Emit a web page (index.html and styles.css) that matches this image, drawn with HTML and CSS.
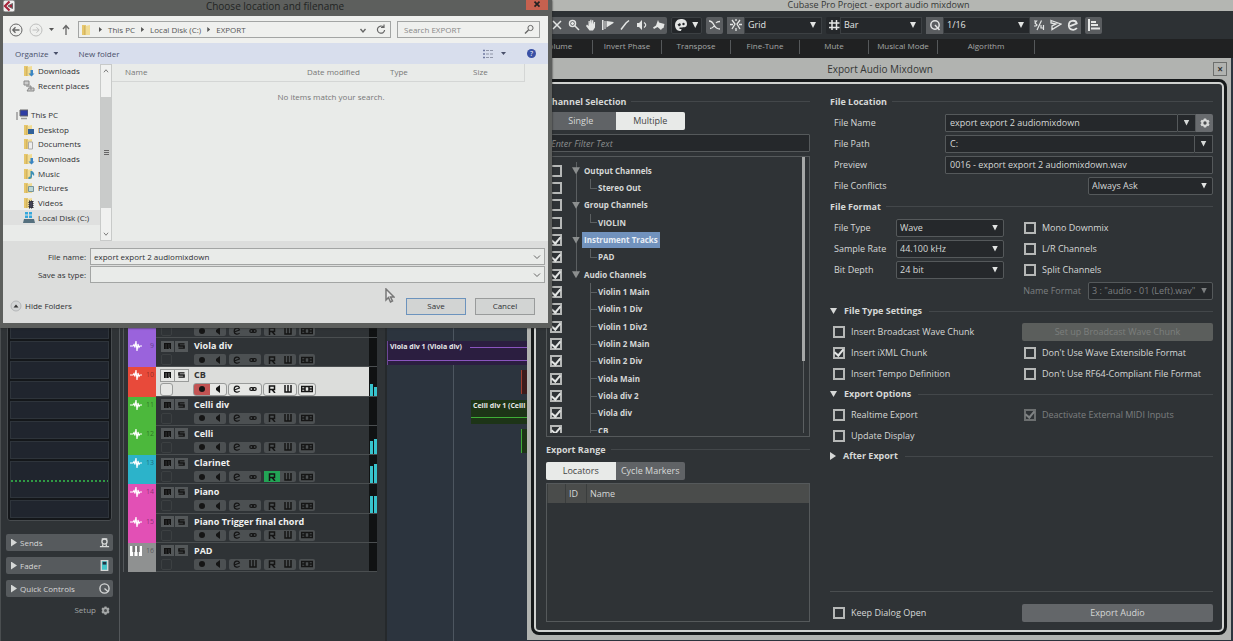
FILE: index.html
```html
<!DOCTYPE html>
<html lang="en">
<head>
<meta charset="utf-8">
<title>Cubase Pro Project - export audio mixdown</title>
<link rel="stylesheet" href="styles.css">
</head>
<body>
<svg class="defs" aria-hidden="true">
  <symbol id="wave" viewBox="0 0 12 10"><path d="M0 5h3l1-1.500 1 3L6 0l1 10 1-7 1 3.500L10 5h2" fill="none" stroke="#fff" stroke-width="1.1"/></symbol>
  <symbol id="keys" viewBox="0 0 12 10"><path d="M0 0h3v10H0zM4.5 0h3v10h-3zM9 0h3v10H9z" fill="#fff"/><path d="M2.4 0h2.700v6H2.400zM7 0h2.700v6H7z" fill="#777"/></symbol>
  <symbol id="m" viewBox="0 0 8 7"><path d="M.5 7V.5h7V7M4 1v6M2.200 1v6M5.800 1v6" fill="none" stroke="currentColor" stroke-width="1.500"/></symbol>
  <symbol id="s" viewBox="0 0 8 7"><path d="M7.500 1H1v2.500h6V6H.5" fill="none" stroke="currentColor" stroke-width="1.700"/></symbol>
  <symbol id="rec" viewBox="0 0 8 8"><circle cx="4" cy="4" r="3" fill="currentColor"/></symbol>
  <symbol id="mon" viewBox="0 0 8 8"><path d="M6 0v8L2 5V3z" fill="currentColor"/></symbol>
  <symbol id="e" viewBox="0 0 8 8"><path d="M2 4.800 6.500 3C6 .6 1.200.2 1.200 4.200c0 3.600 4 3.600 5.400 1.800" fill="none" stroke="currentColor" stroke-width="1.200"/></symbol>
  <symbol id="link" viewBox="0 0 10 8"><rect x="1" y="2.300" width="4.500" height="3.400" rx="1.700" fill="none" stroke="currentColor"/><rect x="4.500" y="2.300" width="4.500" height="3.400" rx="1.700" fill="none" stroke="currentColor"/></symbol>
  <symbol id="r" viewBox="0 0 8 8"><path d="M1.500 8V1h5v3.500h-5M4 4.500 7 8" fill="none" stroke="currentColor" stroke-width="1.500"/></symbol>
  <symbol id="w" viewBox="0 0 8 8"><path d="M1 0v7h6V0M4 0v7" fill="none" stroke="currentColor" stroke-width="1.500"/></symbol>
  <symbol id="lane" viewBox="0 0 12 8"><path d="M.5 1.500h11v5H.5zM4 2v4M8 2v4M1 4h3M8 4h3" fill="none" stroke="currentColor"/></symbol>
  <symbol id="gear" viewBox="0 0 12 12"><path d="M6 .5v11M1.200 3.200l9.600 5.600M1.200 8.800 10.800 3.200" stroke="currentColor" stroke-width="2.800"/><circle cx="6" cy="6" r="3.300" fill="none" stroke="currentColor" stroke-width="2.400"/><circle cx="6" cy="6" r="2" fill="#4c4f51"/></symbol>
  <symbol id="folder" viewBox="0 0 12 12"><path d="M1 1h4v10H1z" fill="#e6c66c"/><path d="M4 2l5-1v10H4z" fill="#f1dc95"/><path d="M4 2v9" stroke="#b99843" stroke-width=".7"/></symbol>
</svg>

<main class="desktop">
  <section class="project">
    <header class="project-title">Cubase Pro Project - export audio mixdown</header>
    <div class="toolbar">
      <div class="tools">
        <button aria-label="Mute"><svg viewBox="0 0 12 12"><path d="m2 2 8 8M10 2l-8 8"/></svg></button>
        <button aria-label="Zoom"><svg viewBox="0 0 12 12"><circle cx="4.500" cy="4.500" r="3"/><path d="m7 7 4 4M3 4.500h3M4.500 3v3"/></svg></button>
        <button aria-label="Hand"><svg viewBox="0 0 12 12"><path class="fill" d="M2 5.500 3.500 7V2h1.300v3L5.300.8h1.200V5l.6-3.700h1.200V5.500l.7-2.500h1.100L10 8.500 8 11.500H4.500L1 7z"/></svg></button>
        <button aria-label="Comp"><svg viewBox="0 0 12 12"><path class="fill" d="M0 1h1.500v10H0zM2.500 2h1v8h-1zM4.500 2l7 1v1l-7 4.500z"/></svg></button>
        <button aria-label="Line"><svg viewBox="0 0 12 12"><path d="M2 10.500 7 4l3-2.500"/></svg></button>
        <button aria-label="Play"><svg viewBox="0 0 12 12"><path class="fill" d="M1 4h2l3-3v10L3 8H1z"/><path d="M8 3.500q3.500 2.500 0 5" stroke-width="1.200"/></svg></button>
        <button aria-label="Colorize"><svg viewBox="0 0 12 12"><path class="fill" d="M0 8.500 3 6.500 5 1l1 2.500 5.500 1.500-1 4-1.500.5L8 11 4.500 8 1 10z"/></svg></button>
      </div>
      <button class="box palette" aria-label="Color"><svg viewBox="0 0 12 12"><path class="fill" d="M6 0C2 0 0 3 0 6s2 6 5 6c2 0 1-2 2-3s5 0 5-4S9 0 6 0"/><path class="hole" d="M2.500 5.500 5 4l1 2-2 1.500zM4.500 8.500h5v1.500h-5z"/><circle cx="8.500" cy="5" r="1.200" class="hole"/></svg><i class="tri"></i></button>
      <button class="box grey" aria-label="Crossfade"><svg viewBox="0 0 12 12"><path d="M0 2q3 0 5 4t6 4M1 9.500q2.500 0 4-2.500M7 4q1-1.500 4-1.500" stroke-width="1.300"/></svg></button>
      <div class="group">
        <button class="grey" aria-label="Snap"><svg viewBox="0 0 12 12"><path d="m2 1 3 4-3 5M10 1 7 5l3 5M6 0v2M6 9v3M0 5.500h3M9 5.500h3" stroke-width="1.300"/></svg></button>
        <span class="pick w-grid"><select aria-label="Snap type"><option>Grid</option></select></span>
      </div>
      <div class="group">
        <svg class="hash" viewBox="0 0 12 12"><path d="M4 1v10M8.500 1v10M1 4h10.500M1 8.500h10.500"/></svg>
        <span class="pick w-bar"><select aria-label="Grid type"><option>Bar</option></select></span>
      </div>
      <div class="group">
        <button class="grey" aria-label="Quantize"><svg viewBox="0 0 12 12"><circle cx="6" cy="6" r="4.200"/><path d="m6 6 4.500 5"/></svg></button>
        <span class="pick w-q"><select aria-label="Quantize value"><option>1/16</option></select></span>
        <button class="grey" aria-label="Soft quantize"><svg viewBox="0 0 12 12"><path d="M1 2h2.500L2 4l2 2-1 1H1M8.500 1.500 4 11M8 6v3h3M10.500 6v5" stroke-width="1.200"/></svg></button>
        <button class="grey" aria-label="Apply quantize"><svg viewBox="0 0 12 12"><path d="M1 1.500 11 5 2 10.500V7l4-2-5-1z" stroke-width="1.300"/></svg></button>
        <button class="grey" aria-label="Quantize panel"><svg viewBox="0 0 8 8"><use href="#e"/></svg></button>
      </div>
      <button class="box grey" aria-label="Align"><svg viewBox="0 0 12 12"><path d="M1 0v12M3 3h5M3 6h7M3 9.500h9" stroke-width="2"/></svg></button>
    </div>
    <div class="infoline">
      <span>Volume</span><span>Invert Phase</span><span>Transpose</span><span>Fine-Tune</span><span>Mute</span><span>Musical Mode</span><span class="long">Algorithm</span>
    </div>

    <div class="workspace">
      <aside class="inspector">
        <div class="rack"><i></i><i></i><i></i><i></i><i></i><i></i><i></i><i></i><i></i><i class="tall"></i><i></i></div>
        <button class="fold"><i class="tri right"></i><span>Sends</span><svg viewBox="0 0 12 12"><circle cx="6" cy="5" r="2.800"/><path d="M1 10.500h10M4 8v2M8 8v2M3 2h6"/></svg></button>
        <button class="fold"><i class="tri right"></i><span>Fader</span><svg viewBox="0 0 12 12"><path d="M2.500.5h7v11h-7z" fill="#45c4c7"/><path d="M4 3.500h4" stroke="#234" stroke-width="3"/></svg></button>
        <button class="fold"><i class="tri right"></i><span>Quick Controls</span><svg viewBox="0 0 12 12"><circle cx="6" cy="6" r="5"/><path d="m6 6 4 3.500"/></svg></button>
        <button class="setup">Setup <svg viewBox="0 0 12 12"><use href="#gear"/></svg></button>
      </aside>

      <div class="tracks">
        <article class="track violet"><div class="tag"><svg><use href="#wave"/></svg>8</div><div class="ms"><button aria-label="Mute"><svg><use href="#m"/></svg></button><button aria-label="Solo"><svg><use href="#s"/></svg></button></div><h3>Viola div 2</h3><i class="slot"></i><div class="strip"><span><button aria-label="Record"><svg><use href="#rec"/></svg></button><button aria-label="Monitor"><svg><use href="#mon"/></svg></button></span><span><button aria-label="Edit"><svg><use href="#e"/></svg></button><button aria-label="Link"><svg><use href="#link"/></svg></button></span><span><button aria-label="Read"><svg><use href="#r"/></svg></button><button aria-label="Write"><svg><use href="#w"/></svg></button></span><span><button aria-label="Lanes"><svg><use href="#lane"/></svg></button></span></div><div class="meter"></div></article>
        <article class="track violet"><div class="tag"><svg><use href="#wave"/></svg>9</div><div class="ms"><button aria-label="Mute"><svg><use href="#m"/></svg></button><button aria-label="Solo"><svg><use href="#s"/></svg></button></div><h3>Viola div</h3><i class="slot"></i><div class="strip"><span><button aria-label="Record"><svg><use href="#rec"/></svg></button><button aria-label="Monitor"><svg><use href="#mon"/></svg></button></span><span><button aria-label="Edit"><svg><use href="#e"/></svg></button><button aria-label="Link"><svg><use href="#link"/></svg></button></span><span><button aria-label="Read"><svg><use href="#r"/></svg></button><button aria-label="Write"><svg><use href="#w"/></svg></button></span><span><button aria-label="Lanes"><svg><use href="#lane"/></svg></button></span></div><div class="meter"></div></article>
        <article class="track red selected"><div class="tag"><svg><use href="#wave"/></svg>10</div><div class="ms"><button aria-label="Mute"><svg><use href="#m"/></svg></button><button aria-label="Solo"><svg><use href="#s"/></svg></button></div><h3>CB</h3><i class="slot"></i><div class="strip"><span><button class="armed" aria-label="Record"><svg><use href="#rec"/></svg></button><button aria-label="Monitor"><svg><use href="#mon"/></svg></button></span><span><button aria-label="Edit"><svg><use href="#e"/></svg></button><button aria-label="Link"><svg><use href="#link"/></svg></button></span><span><button aria-label="Read"><svg><use href="#r"/></svg></button><button aria-label="Write"><svg><use href="#w"/></svg></button></span><span><button aria-label="Lanes"><svg><use href="#lane"/></svg></button></span></div><div class="meter"><i style="height:42%"></i><i style="height:32%"></i></div></article>
        <article class="track green"><div class="tag"><svg><use href="#wave"/></svg>11</div><div class="ms"><button aria-label="Mute"><svg><use href="#m"/></svg></button><button aria-label="Solo"><svg><use href="#s"/></svg></button></div><h3>Celli div</h3><i class="slot"></i><div class="strip"><span><button aria-label="Record"><svg><use href="#rec"/></svg></button><button aria-label="Monitor"><svg><use href="#mon"/></svg></button></span><span><button aria-label="Edit"><svg><use href="#e"/></svg></button><button aria-label="Link"><svg><use href="#link"/></svg></button></span><span><button aria-label="Read"><svg><use href="#r"/></svg></button><button aria-label="Write"><svg><use href="#w"/></svg></button></span><span><button aria-label="Lanes"><svg><use href="#lane"/></svg></button></span></div><div class="meter"></div></article>
        <article class="track green"><div class="tag"><svg><use href="#wave"/></svg>12</div><div class="ms"><button aria-label="Mute"><svg><use href="#m"/></svg></button><button aria-label="Solo"><svg><use href="#s"/></svg></button></div><h3>Celli</h3><i class="slot"></i><div class="strip"><span><button aria-label="Record"><svg><use href="#rec"/></svg></button><button aria-label="Monitor"><svg><use href="#mon"/></svg></button></span><span><button aria-label="Edit"><svg><use href="#e"/></svg></button><button aria-label="Link"><svg><use href="#link"/></svg></button></span><span><button aria-label="Read"><svg><use href="#r"/></svg></button><button aria-label="Write"><svg><use href="#w"/></svg></button></span><span><button aria-label="Lanes"><svg><use href="#lane"/></svg></button></span></div><div class="meter"><i style="height:46%"></i><i style="height:54%"></i></div></article>
        <article class="track cyan"><div class="tag"><svg><use href="#wave"/></svg>13</div><div class="ms"><button aria-label="Mute"><svg><use href="#m"/></svg></button><button aria-label="Solo"><svg><use href="#s"/></svg></button></div><h3>Clarinet</h3><i class="slot"></i><div class="strip"><span><button aria-label="Record"><svg><use href="#rec"/></svg></button><button aria-label="Monitor"><svg><use href="#mon"/></svg></button></span><span><button aria-label="Edit"><svg><use href="#e"/></svg></button><button aria-label="Link"><svg><use href="#link"/></svg></button></span><span><button class="read" aria-label="Read"><svg><use href="#r"/></svg></button><button aria-label="Write"><svg><use href="#w"/></svg></button></span><span><button aria-label="Lanes"><svg><use href="#lane"/></svg></button></span></div><div class="meter"><i style="height:62%"></i><i style="height:68%"></i></div></article>
        <article class="track pink"><div class="tag"><svg><use href="#wave"/></svg>14</div><div class="ms"><button aria-label="Mute"><svg><use href="#m"/></svg></button><button aria-label="Solo"><svg><use href="#s"/></svg></button></div><h3>Piano</h3><i class="slot"></i><div class="strip"><span><button aria-label="Record"><svg><use href="#rec"/></svg></button><button aria-label="Monitor"><svg><use href="#mon"/></svg></button></span><span><button aria-label="Edit"><svg><use href="#e"/></svg></button><button aria-label="Link"><svg><use href="#link"/></svg></button></span><span><button aria-label="Read"><svg><use href="#r"/></svg></button><button aria-label="Write"><svg><use href="#w"/></svg></button></span><span><button aria-label="Lanes"><svg><use href="#lane"/></svg></button></span></div><div class="meter"><i style="height:58%"></i><i style="height:58%"></i></div></article>
        <article class="track pink"><div class="tag"><svg><use href="#wave"/></svg>15</div><div class="ms"><button aria-label="Mute"><svg><use href="#m"/></svg></button><button aria-label="Solo"><svg><use href="#s"/></svg></button></div><h3>Piano Trigger final chord</h3><i class="slot"></i><div class="strip"><span><button aria-label="Record"><svg><use href="#rec"/></svg></button><button aria-label="Monitor"><svg><use href="#mon"/></svg></button></span><span><button aria-label="Edit"><svg><use href="#e"/></svg></button><button aria-label="Link"><svg><use href="#link"/></svg></button></span><span><button aria-label="Read"><svg><use href="#r"/></svg></button><button aria-label="Write"><svg><use href="#w"/></svg></button></span><span><button aria-label="Lanes"><svg><use href="#lane"/></svg></button></span></div><div class="meter"></div></article>
        <article class="track gray"><div class="tag"><svg><use href="#keys"/></svg>16</div><div class="ms"><button aria-label="Mute"><svg><use href="#m"/></svg></button><button aria-label="Solo"><svg><use href="#s"/></svg></button></div><h3>PAD</h3><i class="slot"></i><div class="strip"><span><button aria-label="Record"><svg><use href="#rec"/></svg></button><button aria-label="Monitor"><svg><use href="#mon"/></svg></button></span><span><button aria-label="Edit"><svg><use href="#e"/></svg></button><button aria-label="Instrument"><svg><use href="#w"/></svg></button></span><span><button aria-label="Read"><svg><use href="#r"/></svg></button><button aria-label="Write"><svg><use href="#w"/></svg></button></span><span><button aria-label="Lanes"><svg><use href="#lane"/></svg></button></span></div><div class="meter"></div></article>
      </div>

      <div class="arrange">
        <div class="event ev-viola"><span>Viola div 1 (Viola div)</span></div>
        <div class="event ev-cb"></div>
        <div class="event ev-celli-div"><span>Celli div 1 (Celli div)</span></div>
        <div class="event ev-celli"></div>
      </div>
    </div>
  </section>

  <section class="export" aria-label="Export Audio Mixdown">
    <header class="export-title"><span>Export Audio Mixdown</span><button aria-label="Close">×</button></header>
    <div class="export-body">
      <div class="channels">
        <h2>Channel Selection</h2>
        <div class="tabs"><button>Single</button><button class="on">Multiple</button></div>
        <input class="filter" type="text" placeholder="Enter Filter Text" aria-label="Filter">
        <div class="tree">
          <ul>
            <li><input type="checkbox" id="c1"><i class="tri"></i><label for="c1">Output Channels</label></li>
            <li class="leaf"><input type="checkbox" id="c2"><label for="c2">Stereo Out</label></li>
            <li><input type="checkbox" id="c3"><i class="tri"></i><label for="c3">Group Channels</label></li>
            <li class="leaf"><input type="checkbox" id="c4"><label for="c4">VIOLIN</label></li>
            <li class="picked"><input type="checkbox" id="c5" checked><i class="tri"></i><label for="c5">Instrument Tracks</label></li>
            <li class="leaf"><input type="checkbox" id="c6" checked><label for="c6">PAD</label></li>
            <li class="last"><input type="checkbox" id="c7" checked><i class="tri"></i><label for="c7">Audio Channels</label></li>
            <li class="leaf more"><input type="checkbox" id="c8" checked><label for="c8">Violin 1 Main</label></li>
            <li class="leaf more"><input type="checkbox" id="c9" checked><label for="c9">Violin 1 Div</label></li>
            <li class="leaf more"><input type="checkbox" id="c10" checked><label for="c10">Violin 1 Div2</label></li>
            <li class="leaf more"><input type="checkbox" id="c11" checked><label for="c11">Violin 2 Main</label></li>
            <li class="leaf more"><input type="checkbox" id="c12" checked><label for="c12">Violin 2 Div</label></li>
            <li class="leaf more"><input type="checkbox" id="c13" checked><label for="c13">Viola Main</label></li>
            <li class="leaf more"><input type="checkbox" id="c14" checked><label for="c14">Viola div 2</label></li>
            <li class="leaf more"><input type="checkbox" id="c15" checked><label for="c15">Viola div</label></li>
            <li class="leaf more"><input type="checkbox" id="c16" checked><label for="c16">CB</label></li>
          </ul>
          <div class="track-bar"></div>
        </div>
        <h2>Export Range</h2>
        <div class="tabs range"><button class="on">Locators</button><button>Cycle Markers</button></div>
        <div class="markers"><table><thead><tr><th class="c-check"></th><th class="c-id">ID</th><th>Name</th></tr></thead></table></div>
      </div>

      <div class="settings">
        <h2>File Location</h2>
        <div class="row"><label for="fn">File Name</label><div class="combo"><input id="fn" type="text" value="export export 2 audiomixdown"><button class="drop" aria-label="History"><i class="tri"></i></button><button class="cog" aria-label="Naming scheme"><svg viewBox="0 0 12 12"><use href="#gear"/></svg></button></div></div>
        <div class="row"><label for="fp">File Path</label><div class="combo"><input id="fp" type="text" value="C:"><button class="drop" aria-label="Choose path"><i class="tri"></i></button></div></div>
        <div class="row"><label for="pv">Preview</label><input id="pv" type="text" readonly value="0016 - export export 2 audiomixdown.wav"></div>
        <div class="row conflicts"><label for="fc">File Conflicts</label><span class="pick"><select id="fc"><option>Always Ask</option></select></span></div>
        <h2>File Format</h2>
        <div class="format">
          <label for="ft">File Type</label><span class="pick"><select id="ft"><option>Wave</option></select></span><label class="check"><input type="checkbox">Mono Downmix</label>
          <label for="sr">Sample Rate</label><span class="pick"><select id="sr"><option>44.100 kHz</option></select></span><label class="check"><input type="checkbox">L/R Channels</label>
          <label for="bd">Bit Depth</label><span class="pick"><select id="bd"><option>24 bit</option></select></span><label class="check"><input type="checkbox">Split Channels</label>
        </div>
        <div class="row name-format"><label for="nf">Name Format</label><span class="pick"><select id="nf" disabled><option>3 : "audio - 01 (Left).wav"</option></select></span></div>
        <h2 class="fold-head"><i class="tri"></i>File Type Settings</h2>
        <div class="pair"><label class="check"><input type="checkbox">Insert Broadcast Wave Chunk</label><button class="wide" disabled>Set up Broadcast Wave Chunk</button></div>
        <div class="pair"><label class="check"><input type="checkbox" checked>Insert iXML Chunk</label><label class="check"><input type="checkbox">Don't Use Wave Extensible Format</label></div>
        <div class="pair"><label class="check"><input type="checkbox">Insert Tempo Definition</label><label class="check"><input type="checkbox">Don't Use RF64-Compliant File Format</label></div>
        <h2 class="fold-head"><i class="tri"></i>Export Options</h2>
        <div class="pair"><label class="check"><input type="checkbox">Realtime Export</label><label class="check off"><input type="checkbox" checked disabled>Deactivate External MIDI Inputs</label></div>
        <div class="pair"><label class="check"><input type="checkbox">Update Display</label></div>
        <h2 class="fold-head"><i class="tri right"></i>After Export</h2>
        <footer class="pair"><label class="check"><input type="checkbox">Keep Dialog Open</label><button class="wide">Export Audio</button></footer>
      </div>
    </div>
  </section>

  <section class="saver" aria-label="Choose location and filename">
    <header class="saver-title"><svg viewBox="0 0 12 12"><rect width="12" height="12" rx="2" fill="#eee"/><path d="M6.500 1.500 2 6l4.500 4.500" fill="none" stroke="#a6253b" stroke-width="2.200"/><path d="M5 6l4.500-2.500v5z" fill="#a6253b"/></svg><span>Choose location and filename</span><button aria-label="Close"><svg viewBox="0 0 12 12"><path d="m3 2 6 6M9 2 3 8" stroke="#222" stroke-width="2"/></svg></button></header>
    <div class="nav">
      <button aria-label="Back"><svg class="big" viewBox="0 0 14 14"><circle cx="7" cy="7" r="6"/><path d="M10.500 7H4M6.500 4.300 3.800 7l2.700 2.700" stroke-width="1.300"/></svg></button>
      <button class="faint" aria-label="Forward"><svg class="big" viewBox="0 0 14 14"><circle cx="7" cy="7" r="6"/><path d="M3.500 7H10M7.500 4.300 10.200 7 7.500 9.700"/></svg></button>
      <i class="tri small"></i>
      <button aria-label="Up"><svg viewBox="0 0 12 12"><path d="M6 11V2M3 5l3-3.500L9 5" stroke-width="1.300"/></svg></button>
      <div class="address"><svg viewBox="0 0 12 12"><use href="#folder"/></svg><i class="tri right small"></i><a href="#">This PC</a><i class="tri right small"></i><a href="#">Local Disk (C:)</a><i class="tri right small"></i><a href="#">EXPORT</a><b></b><svg viewBox="0 0 12 12"><path d="m3.500 5 2.500 3 2.500-3" stroke-width="1.400"/></svg><button aria-label="Refresh"><svg viewBox="0 0 12 12"><path d="M8.500 3A3.600 3.600 0 1 0 9.600 6M9 .5V3.500H6" stroke-width="1.200"/></svg></button></div>
      <div class="search"><input type="search" placeholder="Search EXPORT" aria-label="Search EXPORT"><svg viewBox="0 0 12 12"><circle cx="7.500" cy="4" r="2.600"/><path d="M5.500 6 2 9.500" stroke-width="1.500"/></svg></div>
    </div>
    <div class="commands">
      <button>Organize <i class="tri small"></i></button><button>New folder</button><b></b>
      <button aria-label="View"><svg viewBox="0 0 12 12"><path d="M1 2.500h2M1 6h2M1 9.500h2" stroke="#6f7aa0" stroke-width="1.600"/><path d="M4 2.500h3M4 6h3M4 9.500h3M8 2.500h3M8 6h3M8 9.500h3" stroke="#9096a8" stroke-width="1.200"/></svg></button><i class="tri small"></i>
      <button class="help" aria-label="Help">?</button>
    </div>
    <div class="browse">
      <ul class="places">
        <li><svg viewBox="0 0 12 12"><use href="#folder"/><path d="M7.500 5v3.500H5.500l3 3 3-3H10V5z" fill="#3b86c4" stroke="none"/></svg>Downloads</li>
        <li><svg viewBox="0 0 12 12"><path d="M1 1h5v4H1zM3 6h5v4M6 8h5v3H4z" fill="#ccc" stroke="#888"/></svg>Recent places</li>
        <li></li>
        <li class="root"><svg viewBox="0 0 12 12"><path d="M4 1h8v6H4z" fill="#2e3da4"/><path d="M1 3v8M5 9.500h6" stroke="#999" stroke-width="1.500"/></svg>This PC</li>
        <li><svg viewBox="0 0 12 12"><use href="#folder"/><path d="M5 5h6v5H5z" fill="#31619a" stroke="none"/></svg>Desktop</li>
        <li><svg viewBox="0 0 12 12"><use href="#folder"/><path d="M5.500 4h4v7h-4z" fill="#eee" stroke="#aaa"/></svg>Documents</li>
        <li><svg viewBox="0 0 12 12"><use href="#folder"/><path d="M7.500 5v3.500H5.500l3 3 3-3H10V5z" fill="#3b86c4" stroke="none"/></svg>Downloads</li>
        <li><svg viewBox="0 0 12 12"><use href="#folder"/><path d="M7.500 3v5.500q-3 0-2 2.500 3 .5 3.500-2V6l2 2q1-3-2-5z" fill="#3d90b5" stroke="none"/></svg>Music</li>
        <li><svg viewBox="0 0 12 12"><use href="#folder"/><path d="M5.500 4.500h5v5h-5z" fill="#bcd7d6" stroke="#77949a"/></svg>Pictures</li>
        <li><svg viewBox="0 0 12 12"><use href="#folder"/><path d="M6 4h4v7H6z" fill="#445" stroke="#222" stroke-dasharray="1 1"/></svg>Videos</li>
        <li class="current"><svg viewBox="0 0 12 12"><path d="M2 0h3v2.500H2zM6 0h3v2.500H6zM2 3.500h3V6H2zM6 3.500h3V6H6z" fill="#34a7dc" stroke="none"/><path d="M1 7h10l1 4H0z" fill="#55707e" stroke="none"/></svg>Local Disk (C:)</li>
      </ul>
      <div class="scroller"><svg viewBox="0 0 12 12"><path d="m3.500 7.500 2.500-3 2.500 3"/></svg><i></i><svg viewBox="0 0 12 12"><path d="m3.500 4.500 2.500 3 2.500-3"/></svg></div>
      <div class="files">
        <table><thead><tr><th class="f-name">Name</th><th class="f-date">Date modified</th><th class="f-type">Type</th><th>Size</th></tr></thead></table>
        <p>No items match your search.</p>
      </div>
    </div>
    <div class="form">
      <label for="sn">File name:</label><div class="field"><input id="sn" type="text" value="export export 2 audiomixdown"><svg viewBox="0 0 12 12"><path d="m3 4.500 3 3 3-3"/></svg></div>
      <label for="st">Save as type:</label><div class="field"><select id="st"><option></option></select><svg viewBox="0 0 12 12"><path d="m3 4.500 3 3 3-3"/></svg></div>
    </div>
    <footer class="actions">
      <button class="hide"><svg viewBox="0 0 12 12"><circle cx="6" cy="6" r="5" fill="#d3d5d6" stroke="#b4b6b8"/><path d="M3.500 7.500 6 4.500l2.500 3z" fill="#333" stroke="none"/></svg>Hide Folders</button>
      <button class="push default">Save</button><button class="push">Cancel</button>
    </footer>
  </section>
  <svg class="cursor" viewBox="0 0 10 15"><path d="M1 1v11l2.500-2.500L5.500 14l2-1-2-4H9z" fill="#e6e6e6" stroke="#777"/></svg>
</main>
</body>
</html>
```
FILE: styles.css
```css
* { box-sizing: border-box; }
body { margin: 0; background: #2f3336; color: #d6d8d7; font: 9px/12px "Open Sans", "Noto Sans", sans-serif; }
button, input, select { font: inherit; color: inherit; margin: 0; padding: 0; border: 0; border-radius: 0; background: none; appearance: none; outline: 0; min-width: 0; }
ul { list-style: none; margin: 0; padding: 0; }
h2, h3, p { margin: 0; font-size: inherit; }
a { color: inherit; text-decoration: none; }
i { font-style: normal; }
table { border-collapse: collapse; width: 100%; table-layout: fixed; }
th { font-weight: 400; text-align: left; padding: 0; }
svg { width: 12px; height: 12px; flex: none; display: block; fill: none; stroke: currentColor; stroke-width: 1.500; }
symbol, use { stroke: none; }
.defs { position: absolute; width: 0; height: 0; }
.desktop { position: relative; min-height: 100vh; overflow: hidden; display: flex; }
.tri { width: 7px; height: 6px; background: currentColor; clip-path: polygon(0 0, 100% 0, 50% 100%); flex: none; }
.tri.right { width: 6px; height: 8px; clip-path: polygon(0 0, 100% 50%, 0 100%); }
.tri.small { width: 5px; height: 3px; }
.tri.right.small { width: 3px; height: 5px; }

/* drop-downs */
.pick { display: grid; align-items: center; height: 18px; background: #25282b; border: 1px solid #55595b; border-radius: 2px; }
.pick select { grid-area: 1 / 1; width: 100%; height: 100%; padding: 0 16px 0 3px; }
.pick::after { content: ""; grid-area: 1 / 1; justify-self: end; margin-right: 5px; width: 6px; height: 6px; background: #e2e4e3; clip-path: polygon(0 0, 100% 0, 50% 100%); pointer-events: none; }

/* project window */
.project { flex: 1; display: flex; flex-direction: column; min-width: 0; }
.project-title { height: 11px; line-height: 9px; background: #b4b6b2; color: #353736; padding-left: 524px; text-align: center; }
.toolbar { height: 28px; display: flex; align-items: center; gap: 4px; padding-left: 548px; background: #2d3134; color: #e4e6e5; }
.toolbar button { height: 17px; width: 17px; display: grid; place-items: center; }
.toolbar .fill { fill: currentColor; stroke: none; }
.toolbar .hole { fill: #25282b; stroke: none; }
.tools { display: flex; background: #585b5e; border-radius: 2px; }
.toolbar .grey { background: #5a5d60; }
.toolbar .box { border-radius: 2px; }
.toolbar .palette { width: 31px; display: flex; align-items: center; justify-content: space-around; background: #232629; border: 1px solid #3c4043; }
.palette .tri { width: 6px; }
.group { display: flex; align-items: center; background: #25282b; border-radius: 2px; }
.group .pick { height: 17px; border-color: #3c4043; border-radius: 0; }
.hash { margin-left: 2px; }
.w-grid { width: 78px; }
.w-bar { width: 82px; }
.w-q { width: 87px; }
.infoline { display: flex; height: 19px; padding: 1px 0 4px 524px; background: #202122; color: #a5a7a6; font-size: 8px; text-align: center; }
.infoline span { width: 69px; border-right: 1px solid #55585a; }
.infoline .long { width: 97px; }

.workspace { flex: 1; display: flex; min-height: 0; background: #2f3336; }
.inspector { width: 120px; display: flex; flex-direction: column; justify-content: flex-end; gap: 6px; padding: 0 6px 24px 5px; border-left: 1px solid #4a4e50; border-right: 1px solid #53575a; }
.rack { display: flex; flex-direction: column; gap: 2px; padding: 2px; margin: 0 1px 7px; background: #14171a; border: 1px solid #474b4e; border-radius: 3px; }
.rack i { height: 18px; background: #20252e; border: 1px solid #2e343b; }
.rack .tall { height: 37px; background: repeating-linear-gradient(90deg, #2f9a44 0 2px, transparent 2px 4px) 0 18px / 100% 2px no-repeat #20252e; }
.fold { height: 17px; display: flex; align-items: center; gap: 3px; padding: 0 3px 0 5px; background: #565a5d; border-radius: 2px; font-size: 8px; text-align: left; }
.fold span { flex: 1; }
.fold svg { width: 11px; height: 11px; }
.setup { display: flex; justify-content: flex-end; align-items: center; gap: 5px; height: 14px; padding-right: 3px; font-size: 8px; color: #a3a6a6; }
.setup svg { width: 9px; height: 9px; }

.tracks { width: 254px; flex: none; display: grid; grid-template-rows: repeat(9, 1fr); height: 514px; padding-top: 251px; margin-left: 3px; padding-left: 4px; border-left: 1px solid #53575a; }
.track { display: grid; grid-template: 14px 1fr / 28px 32px 1fr 8px; align-items: center; padding-top: 1px; border-bottom: 1px solid #4a4e50; color: #f0f1f0; min-height: 0; }
.track svg { width: 8px; height: 8px; stroke: none; }
.tag { grid-row: 1 / 3; align-self: stretch; margin: -1px 0; padding: 3px 2px; display: flex; justify-content: space-between; color: #00000066; font-size: 7px; line-height: 10px; background: var(--tone); }
.track .tag svg { width: 12px; height: 10px; }
.ms { display: flex; gap: 1px; padding-left: 5px; }
.ms button { width: 14px; height: 11px; display: grid; place-items: center; background: #54585a; color: #111; }
.track .ms svg { width: 7px; height: 6px; }
.track h3 { padding-left: 6px; font-size: 9px; white-space: nowrap; }
.slot { grid-area: 2 / 2; width: 11px; height: 11px; margin-left: 5px; border: 1px solid #3c4042; border-radius: 2px; }
.strip { grid-area: 2 / 3; display: flex; gap: 3px; padding-left: 6px; }
.strip span { display: flex; background: #4c5052; color: #151515; border-radius: 2px; }
.strip button { width: 16px; height: 11px; display: grid; place-items: center; }
.track .strip span:last-child svg { width: 12px; }
.meter { grid-area: 1 / 4 / 3 / 5; align-self: stretch; display: flex; align-items: flex-end; gap: 1px; margin-top: -1px; padding-left: 1px; background: #101213; }
.meter i { width: 3px; background: #37c3cd; }
.selected { background: #dcdddb; color: #333; }
.selected .ms button, .selected .strip span, .selected .slot { background: #e6e7e5; outline: 1px solid #999b9a; border: 0; }
.strip .armed { background: #c25353; }
.strip .read { background: #22a455; }
.violet { --tone: #9a63dc; }
.red { --tone: #e84a3a; }
.green { --tone: #4cb83c; }
.cyan { --tone: #2cb3ca; }
.pink { --tone: #e250b5; }
.gray { --tone: #8f9191; }

.arrange { flex: 1; position: relative; margin-left: 8px; border-left: 2px solid #25292c; background: linear-gradient(90deg, #4d5660 0 1px, transparent 1px) 66px 0 / 400px 100% no-repeat, #2c343e; }
.event { position: absolute; overflow: hidden; font-size: 7px; font-weight: 700; line-height: 11px; color: #e8e8e8; white-space: nowrap; padding-left: 2px; }
.ev-viola { left: 0; top: 283px; width: 400px; height: 24px; background: linear-gradient(#8a55bf 0 0) 0 19px / 100% 1px no-repeat, linear-gradient(#8a55bf 0 0) 82px 6px / 100% 1px no-repeat, #2b1e40; border-left: 1px solid #6c4696; }
.ev-cb { left: 134px; top: 312px; width: 40px; height: 24px; background: #3c1c1c; border-left: 1px solid #a04030; }
.ev-celli-div { left: 84px; top: 342px; width: 200px; height: 24px; background: linear-gradient(#3fae37 0 0) 0 17px / 100% 1px no-repeat, #1d3417; }
.ev-celli { left: 134px; top: 371px; width: 40px; height: 24px; background: #1d3417; border-left: 1px solid #3fae37; }

/* export dialog */
.export { position: absolute; left: 527px; right: 2px; top: 58px; bottom: 1px; display: flex; flex-direction: column; padding: 0 4px 5px; background: #b1b3b0; }
.export-title { height: 21px; flex: none; display: flex; align-items: center; color: #353736; font-size: 10px; text-align: center; }
.export-title span { flex: 1; padding-left: 16px; }
.export-title button { width: 14px; height: 14px; border: 1px solid #6d6f6d; font-weight: 700; line-height: 10px; }
.export-body { flex: 1; display: grid; grid-template-columns: 264px 1fr; gap: 20px; padding: 7px 9px 8px 10px; border: 2px solid #cfd1cf; border-radius: 5px; outline: 3px solid #16191a; margin: 3px; background: #2f3336; min-height: 0; }
.export h2 { height: 21px; display: flex; align-items: center; gap: 5px; flex: none; }
.export h2::after { content: ""; flex: 1; height: 1px; background: #43474a; }
.channels, .settings { display: flex; flex-direction: column; min-width: 0; min-height: 0; }
.tabs { display: flex; width: 139px; height: 18px; flex: none; border-radius: 2px; overflow: hidden; background: #606366; }
.tabs.range { margin-top: 2px; }
.tabs button { flex: 1; }
.tabs .on { background: #e8eae8; color: #444; }
.export input[type="text"] { width: 100%; height: 18px; padding: 0 4px; background: #25282b; border: 1px solid #55595b; border-radius: 1px; }
.export .filter { margin: 4px 0; flex: none; font-style: italic; }
.filter::placeholder { color: #8b8e8e; opacity: 1; }
.tree { height: 281px; flex: none; display: flex; margin-bottom: 2px; padding: 0 4px 3px 3px; border: 1px solid #55595b; }
.tree ul { flex: 1; height: 276px; overflow: hidden; padding-top: 5px; display: grid; grid-template-rows: repeat(16, 6.4%); }
.tree li { display: flex; align-items: center; font-size: 8px; font-weight: 700; min-height: 0; background: linear-gradient(#5b5f61 0 0) 26px 0 / 1px 100% no-repeat; }
.tree li.last { background-size: 1px 50%; }
.tree li .tri { margin-left: 10px; color: #8c8f8f; height: 7px; width: 8px; }
.tree li label { padding: 2px 2px; margin-left: 2px; }
.tree .leaf { background: linear-gradient(#5b5f61 0 0) 40px 0 / 1px 50% no-repeat, linear-gradient(#5b5f61 0 0) 40px 50% / 7px 1px no-repeat, linear-gradient(#5b5f61 0 0) 26px 0 / 1px 100% no-repeat; }
.tree .leaf.more { background: linear-gradient(#5b5f61 0 0) 40px 0 / 1px 100% no-repeat, linear-gradient(#5b5f61 0 0) 40px 50% / 7px 1px no-repeat; }
.tree .leaf label { margin-left: 34px; }
.tree .picked label { background: #7192bd; color: #e9eef5; }
.track-bar { width: 3px; background: linear-gradient(#a5a7a7 0 0) 0 0 / 3px 204px no-repeat, linear-gradient(#5b5f61 0 0) 1px 0 / 1px 100% no-repeat; }
.export input[type="checkbox"] { width: 12px; height: 12px; flex: none; display: grid; place-items: center; border: 2px solid #b6b8b7; }
.export input[type="checkbox"]:checked::before { content: ""; width: 4px; height: 7px; border: solid #e2e4e3; border-width: 0 2px 2px 0; rotate: 40deg; margin-top: -2px; }
.markers { flex: 1; margin-top: 3px; border: 1px solid #55595b; min-height: 0; }
.markers th { height: 19px; padding-left: 3px; background: #4a4c4b; border-left: 1px solid #3a3d3d; }
.markers .c-check { width: 18px; }
.markers .c-id { width: 21px; }

.settings .row { height: 21px; display: grid; grid-template-columns: 111px 1fr; align-items: center; padding-left: 4px; flex: none; }
.settings .conflicts { grid-template-columns: 1fr 125px; }
.settings .name-format { grid-template-columns: 1fr 125px; color: #7c7f80; }
.name-format label { text-align: right; padding-right: 7px; }
.name-format .pick::after { background: #7c7f80; }
.name-format select { opacity: 1; }
.settings h2.fold-head { height: 20px; gap: 7px; }
.combo { display: flex; }
.combo input { flex: 1; }
.combo .tri { width: 6px; }
.drop { width: 18px; height: 18px; display: grid; place-items: center; background: #25282b; border: 1px solid #55595b; border-left: 0; }
.cog { width: 17px; height: 18px; display: grid; place-items: center; background: #686b6e; border-radius: 0 2px 2px 0; }
.cog svg { width: 10px; height: 10px; }
.format { display: grid; grid-template-columns: 62px 108px 1fr; grid-auto-rows: 21px; align-items: center; padding-left: 4px; flex: none; }
.check { display: flex; align-items: center; gap: 6px; }
.format .check { padding-left: 20px; }
.pair { height: 21px; display: grid; grid-template-columns: 191px 1fr; align-items: center; padding-left: 3px; flex: none; }
.off { opacity: .45; }
.wide { height: 18px; margin-left: -2px; background: #636669; border-radius: 2px; }
.wide:disabled { background: #5b5e5c; color: #7b7e7c; }
.settings footer { margin-top: auto; height: 31px; border-top: 1px solid #4a4e50; padding-top: 12px; }

/* save dialog */
.saver { position: absolute; left: 0; top: 0; width: 552px; max-width: 100%; height: 328px; display: flex; flex-direction: column; padding: 0 4px 5px 3px; background: #5d5f5d; color: #2f3033; font-size: 8px; box-shadow: 0 0 2px #222; }
.saver-title { height: 16px; display: flex; align-items: flex-start; font-size: 10px; line-height: 12px; color: #222423; text-align: center; }
.saver-title span { flex: 1; padding-left: 9px; }
.saver-title button { width: 22px; height: 10px; display: grid; place-items: center; background: #c6614f; }
.saver-title button svg { width: 10px; height: 10px; }
.saver svg { stroke-width: 1; color: #666; }
.saver .big { width: 14px; height: 14px; }
.nav { height: 27px; display: flex; align-items: center; gap: 6px; padding: 0 8px 0 6px; background: #eff0ee; color: #555; }
.faint { opacity: .35; }
.address { flex: 1; height: 17px; display: flex; align-items: center; gap: 6px; padding: 0 3px 0 2px; border: 1px solid #a3a5a4; }
.address b, .commands b { flex: 1; }
.search { width: 143px; height: 17px; display: flex; align-items: center; padding: 0 4px 0 6px; border: 1px solid #a3a5a4; }
.search input { flex: 1; }
.search input::placeholder { color: #888; opacity: 1; }
.commands { height: 21px; display: flex; align-items: center; gap: 7px; padding: 0 12px 0 12px; background: #d8deed; color: #49506a; }
.commands button { display: flex; align-items: center; gap: 5px; margin-right: 13px; }
.commands b + button { margin: 0; }
.commands .help { width: 9px; height: 9px; margin: 0 0 0 14px; justify-content: center; border-radius: 50%; background: #3950a5; color: #fff; font-size: 7px; line-height: 9px; }
.browse { flex: 1; display: flex; min-height: 0; background: #e9ebe9; }
.places { width: 97px; height: 161px; display: grid; grid-template-rows: repeat(11, 1fr); background: #edeeed; }
.places li { display: flex; align-items: center; gap: 3px; padding-left: 20px; white-space: nowrap; min-height: 0; }
.places .root { padding-left: 13px; }
.places .current { background: #dfe0df; }
.scroller { width: 12px; display: flex; flex-direction: column; border: 1px solid #c8cac9; background: #f0f1f0; }
.scroller svg { width: 10px; height: 12px; }
.scroller i { flex: 1; margin: 20px 0 20px; background: linear-gradient(#666 0 1px, transparent 1px 2px, #666 2px 3px, transparent 3px 4px, #666 4px 5px) center / 5px 5px no-repeat #c9cbca; }
.files { flex: 1; min-width: 0; padding-right: 23px; color: #777; }
.files th { height: 17px; padding-left: 13px; border-bottom: 1px solid #d4d6d5; }
.files th:last-child { border-right: 1px solid #d4d6d5; }
.files .f-name { width: 182px; }
.files .f-date { width: 83px; }
.files .f-type { width: 83px; }
.files p { margin-top: 9px; text-align: center; padding-left: 25px; }
.form { display: grid; grid-template-columns: 83px 1fr; gap: 1px 4px; padding: 7px 3px 0 0; background: #dcdddc; align-items: center; }
.form label { text-align: right; }
.field { display: flex; align-items: center; height: 17px; padding: 0 1px 0 3px; background: #e9ebe9; border: 1px solid #a3a5a4; }
.field input, .field select { flex: 1; }
.actions { height: 40px; display: flex; align-items: center; gap: 9px; padding: 6px 13px 0 7px; background: #dcdddc; }
.hide { display: flex; align-items: center; gap: 3px; margin-right: auto; }
.push { width: 60px; height: 17px; background: #d2d4d3; border: 1px solid #999b9b; }
.push.default { border-color: #6c93bd; }
.cursor { position: absolute; left: 385px; top: 288px; width: 10px; height: 15px; }
```
